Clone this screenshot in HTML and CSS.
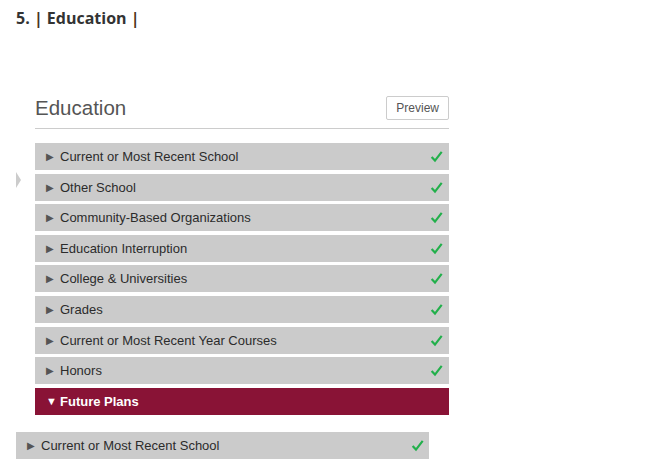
FILE: index.html
```html
<!DOCTYPE html>
<html lang="en">
<head>
    <meta charset="UTF-8">
    <meta name="viewport" content="width=device-width, initial-scale=1.0">
    <title>Education</title>
    <link rel="stylesheet" href="styles.css">
</head>
<body>
    <h1 class="step">5. <span class="pipe">|</span> Education <span class="pipe">|</span></h1>

    <div class="panel">
        <span class="handle"></span>
        <div class="panel-head">
            <h2>Education</h2>
            <button class="preview">Preview</button>
        </div>

        <ul class="sections">
            <li class="row"><span class="arrow">&#9654;</span>Current or Most Recent School<svg class="check" viewBox="0 0 12 12"><path d="M1.5 6.5 L4.6 9.8 L10.8 1.8"/></svg></li>
            <li class="row"><span class="arrow">&#9654;</span>Other School<svg class="check" viewBox="0 0 12 12"><path d="M1.5 6.5 L4.6 9.8 L10.8 1.8"/></svg></li>
            <li class="row"><span class="arrow">&#9654;</span>Community-Based Organizations<svg class="check" viewBox="0 0 12 12"><path d="M1.5 6.5 L4.6 9.8 L10.8 1.8"/></svg></li>
            <li class="row"><span class="arrow">&#9654;</span>Education Interruption<svg class="check" viewBox="0 0 12 12"><path d="M1.5 6.5 L4.6 9.8 L10.8 1.8"/></svg></li>
            <li class="row"><span class="arrow">&#9654;</span>College &amp; Universities<svg class="check" viewBox="0 0 12 12"><path d="M1.5 6.5 L4.6 9.8 L10.8 1.8"/></svg></li>
            <li class="row"><span class="arrow">&#9654;</span>Grades<svg class="check" viewBox="0 0 12 12"><path d="M1.5 6.5 L4.6 9.8 L10.8 1.8"/></svg></li>
            <li class="row"><span class="arrow">&#9654;</span>Current or Most Recent Year Courses<svg class="check" viewBox="0 0 12 12"><path d="M1.5 6.5 L4.6 9.8 L10.8 1.8"/></svg></li>
            <li class="row"><span class="arrow">&#9654;</span>Honors<svg class="check" viewBox="0 0 12 12"><path d="M1.5 6.5 L4.6 9.8 L10.8 1.8"/></svg></li>
            <li class="row open"><span class="arrow">&#9660;</span>Future Plans</li>
        </ul>
    </div>

    <div class="row single"><span class="arrow">&#9654;</span>Current or Most Recent School<svg class="check" viewBox="0 0 12 12"><path d="M1.5 6.5 L4.6 9.8 L10.8 1.8"/></svg></div>
</body>
</html>
```

FILE: styles.css
```css
body {
    margin: 0;
    padding: 7px 16px 0;
    background-color: #fff;
    font-family: "Liberation Sans", Arial, sans-serif;
    color: #333;
}
.step {
    margin: 0;
    font-family: "Open Sans", "DejaVu Sans", sans-serif;
    font-size: 16px;
    font-weight: bold;
    color: #333;
    line-height: 22px;
}
.pipe {
    color: #4a3320;
}
.panel {
    position: relative;
    width: 414px;
    margin: 66px 0 0 19px;
}
.handle {
    position: absolute;
    left: -19px;
    top: 77px;
    width: 0;
    height: 0;
    border-top: 8px solid transparent;
    border-bottom: 8px solid transparent;
    border-left: 5px solid #ccc;
}
.panel-head {
    display: flex;
    justify-content: space-between;
    align-items: center;
    height: 33px;
    border-bottom: 1px solid #ccc;
}
.panel-head h2 {
    margin: 0 0 8px;
    font-size: 20.5px;
    font-weight: normal;
    color: #555;
}
.preview {
    margin-bottom: 8px;
    height: 24px;
    padding: 0 9px;
    background: #fff;
    border: 1px solid #ccc;
    border-radius: 2px;
    font-family: "Liberation Sans", Arial, sans-serif;
    font-size: 12px;
    color: #555;
}
.sections {
    list-style: none;
    margin: 14px 0 0;
    padding: 0;
    display: flex;
    flex-direction: column;
    gap: 3.6px;
}
.row {
    display: flex;
    align-items: center;
    height: 27px;
    padding: 0 6px 0 11px;
    background-color: #cbcbcb;
    font-size: 13px;
    color: #2b2b2b;
}
.arrow {
    width: 14px;
    font-size: 10px;
    color: #555;
}
.check {
    width: 13px;
    height: 13px;
    margin-left: auto;
}
.check path {
    fill: none;
    stroke: #22b04b;
    stroke-width: 2;
}
.row.open {
    background-color: #891336;
    color: #fff;
    font-weight: bold;
}
.row.open .arrow {
    color: #fff;
    font-size: 11px;
}
.row.single {
    width: 413px;
    box-sizing: border-box;
    margin-top: 17px;
    padding-left: 11px;
    padding-right: 5px;
}
```
